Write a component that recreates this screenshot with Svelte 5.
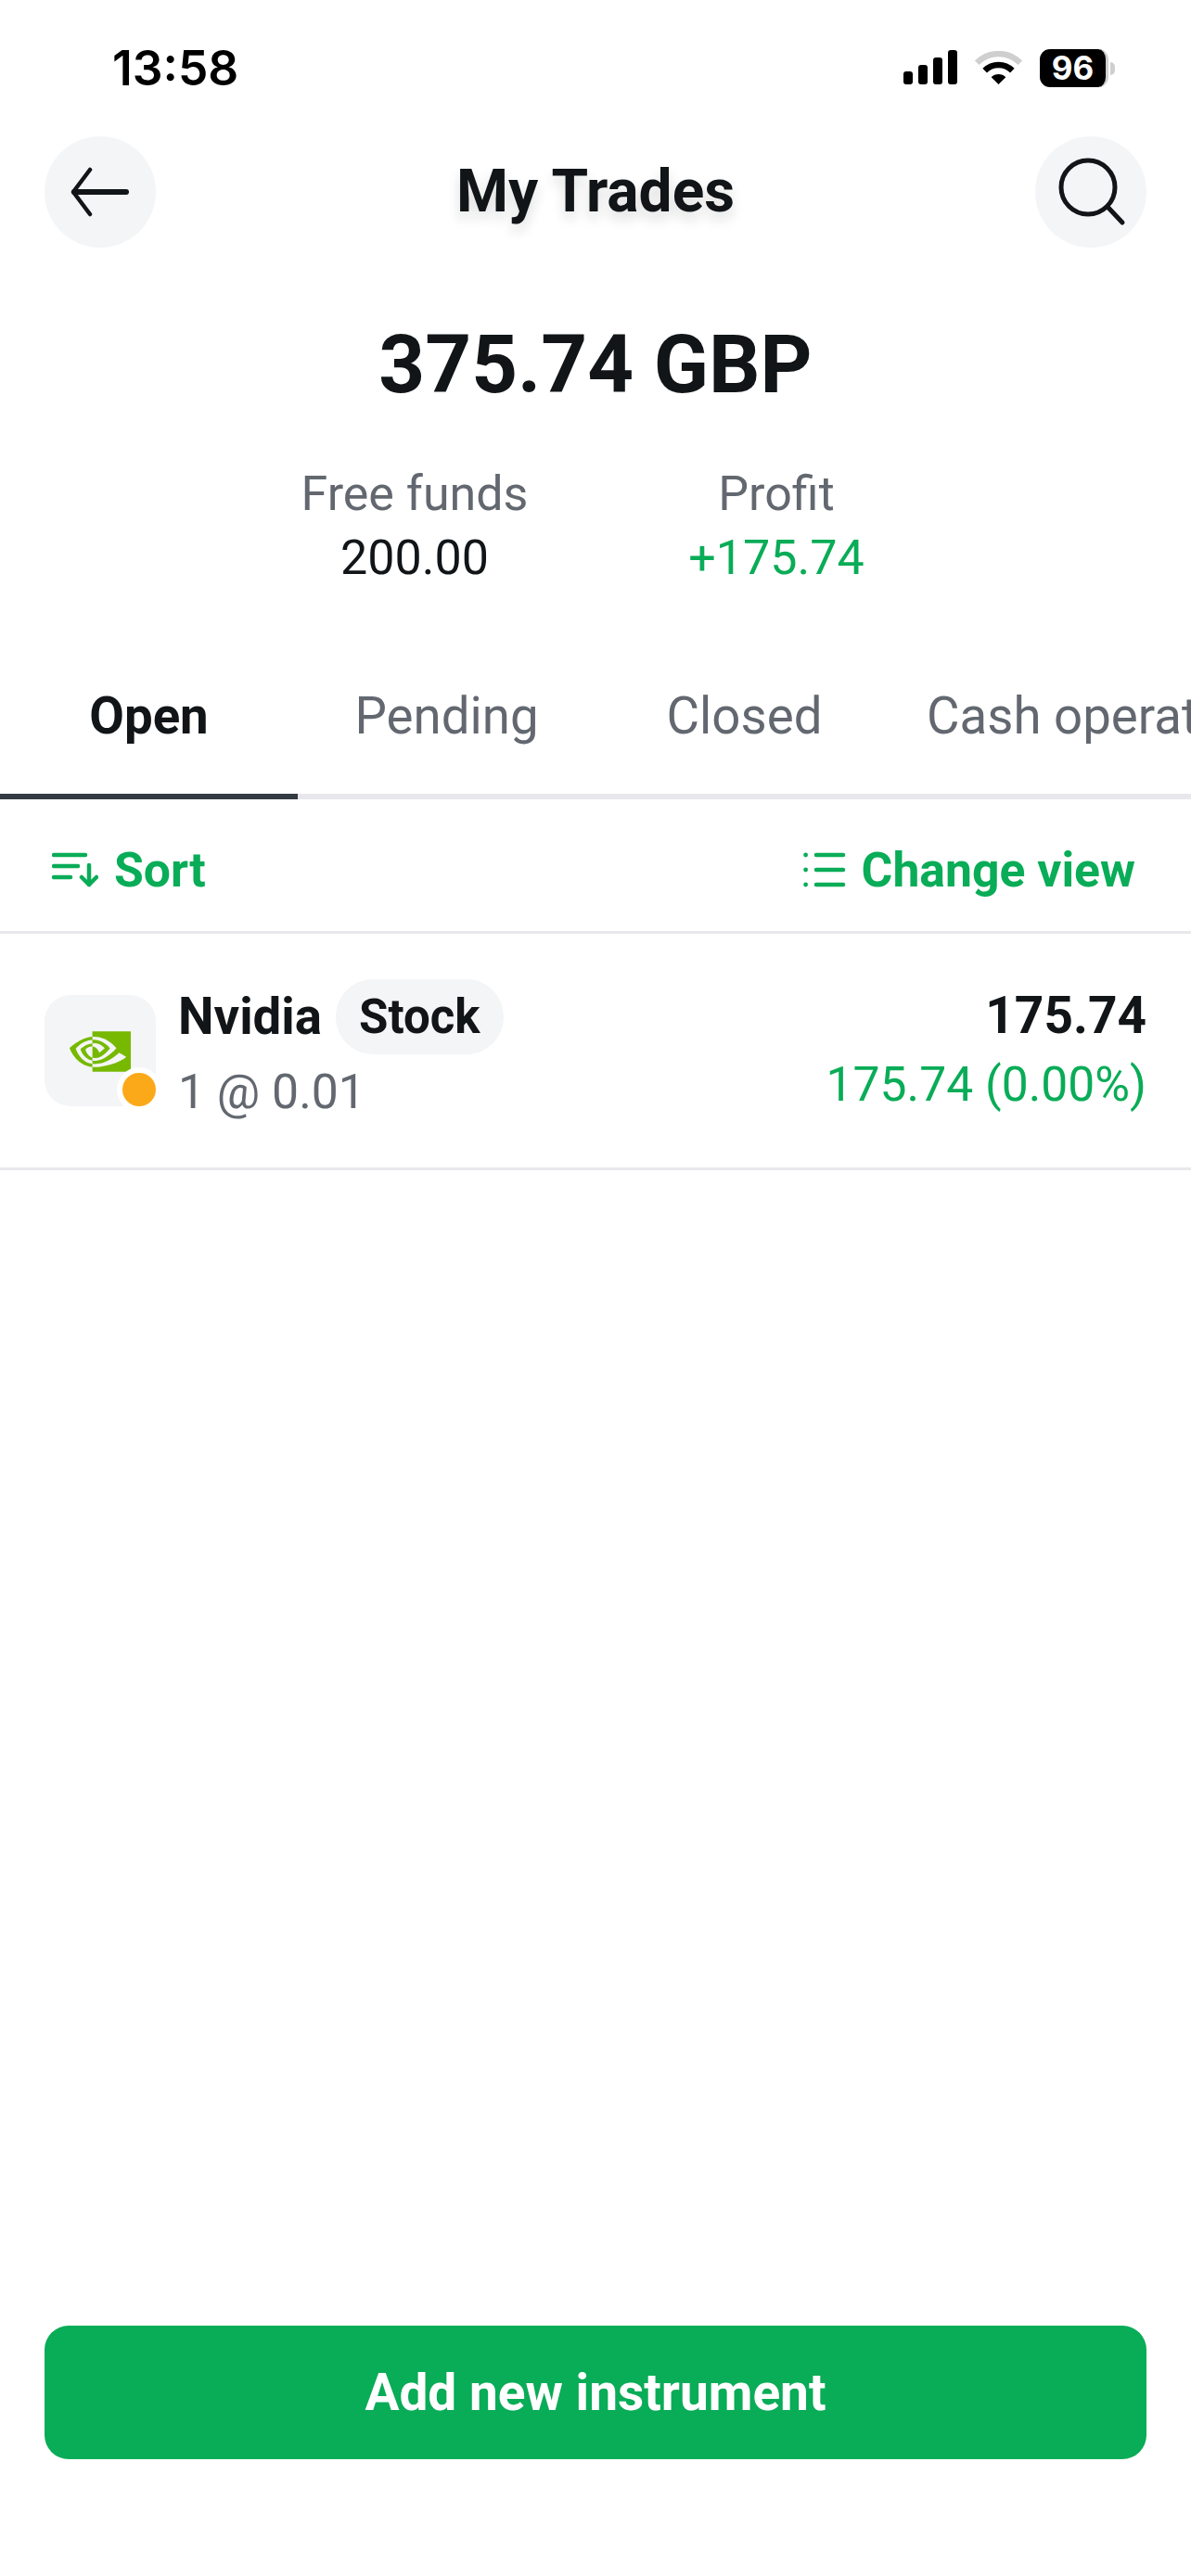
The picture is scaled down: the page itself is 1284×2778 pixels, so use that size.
<script>
	const tabs = ['Open', 'Pending', 'Closed', 'Cash operations'];
</script>

<div class="page">
	<div class="status-bar">
		<span class="time">13:58</span>
		<div class="status-icons">
			<div class="signal">
				<i class="b1"></i>
				<i class="b2"></i>
				<i class="b3"></i>
				<i class="b4"></i>
			</div>
			<svg class="wifi" width="51" height="36" viewBox="0 0 51 36" fill="none">
				<path d="M2.2 12.7A33 33 0 0 1 48.8 12.7" stroke="#cfcfcf" stroke-width="6.5" />
				<path d="M10.65 21.15A21 21 0 0 1 40.35 21.15" stroke="#000" stroke-width="6.5" />
				<path d="M25.5 36L17.7 28.2A11 11 0 0 1 33.3 28.2Z" fill="#000" />
			</svg>
			<div class="battery">
				<div class="battery-body">96</div>
				<div class="battery-nub"></div>
			</div>
		</div>
	</div>

	<header class="top-bar">
		<button class="round-btn" aria-label="Back">
			<svg width="64" height="54" viewBox="0 0 64 54" fill="none" stroke="#111518" stroke-linecap="round" stroke-linejoin="round">
				<path d="M60 27H4" stroke-width="6" />
				<path d="M21 3L3 27L21 51" stroke-width="4.5" />
			</svg>
		</button>
		<h1>My Trades</h1>
		<button class="round-btn" aria-label="Search">
			<svg width="76" height="76" viewBox="0 0 76 76" fill="none" stroke="#111518" stroke-linecap="round">
				<circle cx="35" cy="33" r="29" stroke-width="5" />
				<path d="M56 54L72 71" stroke-width="5" />
			</svg>
		</button>
	</header>

	<div class="total">375.74 GBP</div>

	<div class="stats">
		<div class="stat">
			<span class="label">Free funds</span>
			<span class="value">200.00</span>
		</div>
		<div class="stat">
			<span class="label">Profit</span>
			<span class="value green">+175.74</span>
		</div>
	</div>

	<nav class="tabs">
		{#each tabs as tab, i}
			<div class="tab" class:active={i === 0}>{tab}</div>
		{/each}
	</nav>

	<div class="toolbar">
		<div class="tool">
			<svg width="50" height="38" viewBox="0 0 50 38" fill="none" stroke="#09ac57" stroke-width="4.5" stroke-linecap="round" stroke-linejoin="round">
				<path d="M2 3H36" />
				<path d="M2 15H28" />
				<path d="M2 27H20" />
				<path d="M40 14V35" />
				<path d="M32 27L40 35L48 27" />
			</svg>
			<span>Sort</span>
		</div>
		<div class="tool">
			<svg width="46" height="38" viewBox="0 0 46 38" fill="none" stroke="#09ac57" stroke-width="4.5" stroke-linecap="round">
				<path d="M14 3H43" />
				<path d="M14 19H43" />
				<path d="M14 35H43" />
				<circle cx="2.6" cy="3" r="2.4" fill="#09ac57" stroke="none" />
				<circle cx="2.6" cy="19" r="2.4" fill="#09ac57" stroke="none" />
				<circle cx="2.6" cy="35" r="2.4" fill="#09ac57" stroke="none" />
			</svg>
			<span>Change view</span>
		</div>
	</div>

	<div class="trade-row">
		<div class="logo">
			<svg width="66" height="44" viewBox="0 4 24 16">
				<path fill="#76b900" d="M8.948 8.798v-1.43a6.7 6.7 0 0 1 .424-.018c3.922-.124 6.493 3.374 6.493 3.374s-2.774 3.851-5.75 3.851c-.398 0-.787-.062-1.158-.185v-4.346c1.528.185 1.837.857 2.747 2.385l2.04-1.714s-1.492-1.952-4-1.952a6.016 6.016 0 0 0-.796.035m0-4.735v2.138l.424-.027c5.45-.185 9.01 4.47 9.01 4.47s-4.08 4.964-8.33 4.964c-.37 0-.733-.035-1.095-.097v1.325c.3.035.61.062.91.062 3.957 0 6.82-2.023 9.593-4.408.459.371 2.34 1.263 2.73 1.652-2.633 2.208-8.772 3.984-12.253 3.984-.335 0-.653-.018-.971-.053v1.864H24V4.063zm0 10.326v1.131c-3.657-.654-4.673-4.46-4.673-4.46s1.758-1.944 4.673-2.262v1.237H8.94c-1.528-.186-2.73 1.245-2.73 1.245s.68 2.412 2.739 3.11M2.456 10.9s2.164-3.197 6.5-3.533V6.201C4.153 6.59 0 10.653 0 10.653s2.35 6.802 8.948 7.42v-1.237c-4.84-.6-6.492-5.936-6.492-5.936z" />
			</svg>
			<span class="dot"></span>
		</div>
		<div class="trade-info">
			<div class="trade-name">
				<strong>Nvidia</strong>
				<span class="pill">Stock</span>
			</div>
			<div class="trade-sub">1 @ 0.01</div>
		</div>
		<div class="trade-values">
			<strong>175.74</strong>
			<span class="green">175.74 (0.00%)</span>
		</div>
	</div>

	<div class="spacer"></div>

	<div class="footer">
		<button class="add-btn">Add new instrument</button>
	</div>
</div>

<style>
	:global(body) {
		background: #fff;
	}

	.page {
		width: 1284px;
		height: 2778px;
		display: flex;
		flex-direction: column;
		overflow: hidden;
		font-family: Roboto, sans-serif;
		color: #111518;
	}

	.status-bar {
		height: 147px;
		box-sizing: border-box;
		padding: 47px 82px 0 121px;
		display: flex;
		justify-content: space-between;
		align-items: flex-start;
	}

	.time {
		font-family: Inter, sans-serif;
		font-weight: 600;
		font-size: 51.5px;
		line-height: 52px;
		color: #000;
	}

	.status-icons {
		display: flex;
		align-items: flex-end;
		margin-top: 6px;
	}

	.signal {
		display: flex;
		align-items: flex-end;
		gap: 6px;
		height: 37px;
		margin-right: 19px;
	}

	.signal i {
		width: 10px;
		background: #000;
		border-radius: 3px;
	}

	.b1 { height: 14px; }
	.b2 { height: 21px; }
	.b3 { height: 29px; }
	.b4 { height: 37px; }

	.wifi {
		margin-right: 19px;
	}

	.battery {
		display: flex;
		align-items: center;
		height: 41px;
		margin-bottom: -3px;
	}

	.battery-body {
		width: 74px;
		height: 41px;
		box-sizing: border-box;
		border-radius: 11px;
		border-right: 3px solid #cfcfcf;
		background: #000;
		color: #fff;
		font-family: Inter, sans-serif;
		font-weight: 700;
		font-size: 35px;
		line-height: 41px;
		text-align: center;
	}

	.battery-nub {
		width: 5px;
		height: 14px;
		margin-left: 2px;
		background: #cfcfcf;
		border-radius: 0 7px 7px 0;
	}

	.top-bar {
		height: 120px;
		padding: 0 48px;
		display: flex;
		justify-content: space-between;
		align-items: center;
	}

	.round-btn {
		width: 120px;
		height: 120px;
		padding: 0;
		border: none;
		border-radius: 50%;
		background: #f4f5f7;
		display: flex;
		align-items: center;
		justify-content: center;
	}

	.top-bar h1 {
		margin: 0;
		font-size: 64px;
		line-height: 70px;
		font-weight: 700;
		text-shadow: 0 8px 14px rgba(17, 21, 24, 0.14);
	}

	.total {
		margin-top: 70px;
		height: 112px;
		text-align: center;
		font-size: 87px;
		line-height: 112px;
		font-weight: 700;
	}

	.stats {
		margin-top: 49px;
		display: flex;
		justify-content: center;
		gap: 140px;
		font-size: 52px;
		line-height: 69px;
	}

	.stat {
		display: flex;
		flex-direction: column;
		align-items: center;
		min-width: 250px;
	}

	.label {
		color: #636870;
	}

	.green {
		color: #09ac57;
	}

	.tabs {
		margin-top: 93px;
		display: flex;
		overflow: hidden;
		flex-shrink: 0;
		font-size: 54.6px;
		color: #636870;
	}

	.tab {
		flex: 0 0 auto;
		min-width: 321px;
		height: 133px;
		box-sizing: border-box;
		padding: 11px 36px 0;
		border-bottom: 6px solid #e8e8ec;
		text-align: center;
		white-space: nowrap;
		line-height: 64px;
	}

	.tab.active {
		color: #111518;
		font-weight: 700;
		border-bottom-color: #343a42;
	}

	.toolbar {
		height: 145px;
		padding: 10px 60px 0 56px;
		box-sizing: border-box;
		border-bottom: 3px solid #e8e8ec;
		display: flex;
		justify-content: space-between;
		align-items: center;
		flex-shrink: 0;
		color: #09ac57;
		font-size: 51.7px;
		font-weight: 700;
	}

	.tool {
		display: flex;
		align-items: center;
		gap: 17px;
	}

	.trade-row {
		height: 255px;
		box-sizing: border-box;
		padding: 0 48px;
		border-bottom: 3px solid #e8e8ec;
		display: flex;
		align-items: center;
		flex-shrink: 0;
	}

	.logo {
		position: relative;
		width: 120px;
		height: 120px;
		margin-right: 24px;
		border-radius: 28px;
		background: #f4f5f7;
		display: flex;
		align-items: center;
		justify-content: center;
	}

	.logo svg {
		margin-top: 2px;
	}

	.dot {
		position: absolute;
		right: 0;
		bottom: 0;
		width: 36px;
		height: 36px;
		border-radius: 50%;
		background: #fca919;
		box-shadow: 0 0 0 6px #fff;
	}

	.trade-info {
		flex: 1;
		padding-bottom: 2px;
	}

	.trade-name {
		display: flex;
		align-items: center;
		gap: 15px;
		font-size: 54.6px;
		line-height: 81px;
	}

	.pill {
		padding: 0 25px;
		border-radius: 40px;
		background: #f4f5f7;
		font-size: 51px;
		font-weight: 700;
	}

	.trade-sub {
		color: #636870;
		font-size: 51.7px;
		line-height: 60px;
		margin-top: 11px;
	}

	.trade-values {
		display: flex;
		flex-direction: column;
		align-items: flex-end;
		font-size: 51.6px;
		padding-bottom: 4px;
	}

	.trade-values strong {
		font-size: 55px;
		line-height: 64px;
	}

	.trade-values span {
		line-height: 60px;
		margin-top: 13px;
	}

	.spacer {
		flex: 1;
	}

	.footer {
		padding: 0 48px 126px;
	}

	.add-btn {
		width: 100%;
		height: 144px;
		border: none;
		border-radius: 26px;
		background: #09ac57;
		color: #fff;
		font-family: Roboto, sans-serif;
		font-size: 55px;
		font-weight: 700;
	}
</style>
